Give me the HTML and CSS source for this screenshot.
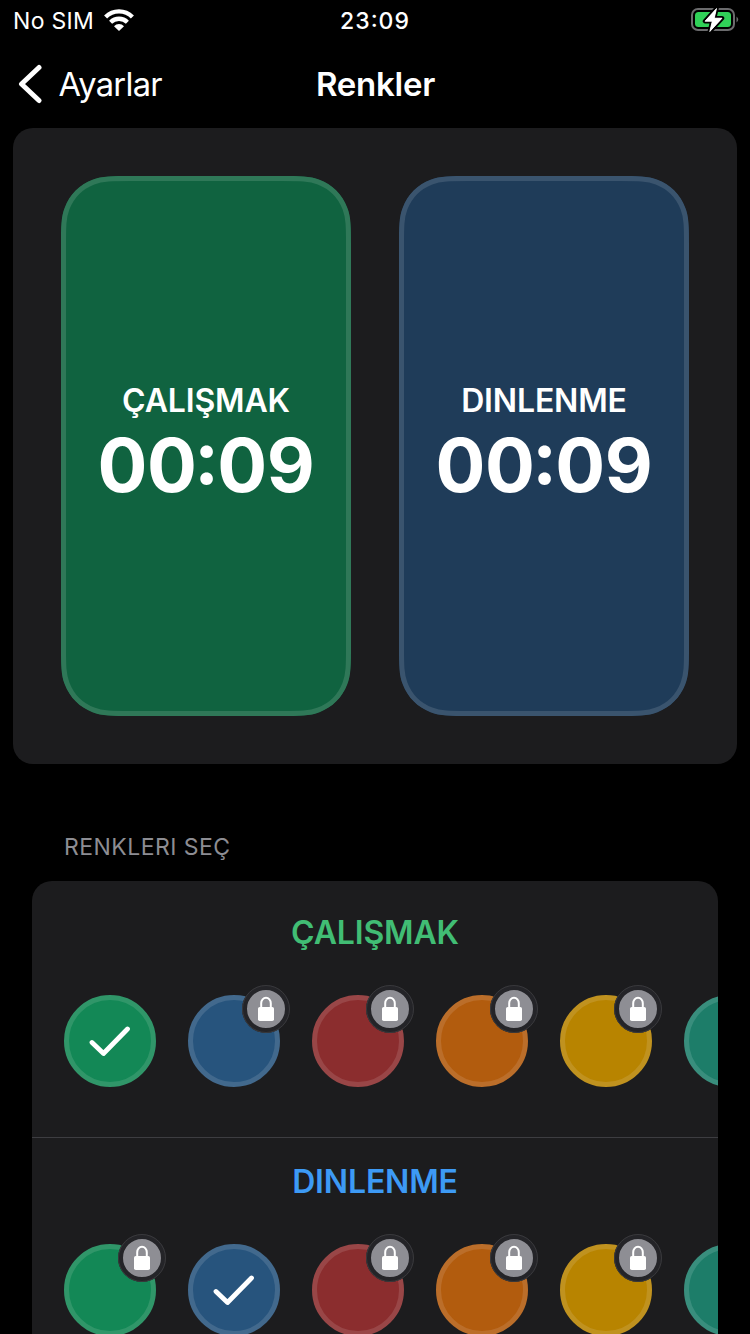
FILE: index.html
```
<!DOCTYPE html>
<html lang="tr">
<head>
<meta charset="utf-8">
<title>Renkler</title>
<link rel="stylesheet" href="styles.css">
</head>
<body>
<svg class="defs" width="0" height="0" aria-hidden="true">
  <symbol id="lock" viewBox="0 0 18 26">
    <path d="M4.200 12V7.200a4.800 5.400 0 0 1 9.600 0V12" fill="none" stroke="#fff" stroke-width="2"/>
    <rect x="1" y="11" width="16" height="14" rx="1.800" fill="#fff"/>
  </symbol>
  <symbol id="check" viewBox="0 0 42 32">
    <path d="M3 17.500L14.500 28.500L38.500 4" fill="none" stroke="#fff" stroke-width="4.800" stroke-linecap="round" stroke-linejoin="round"/>
  </symbol>
  <clipPath id="squircle"><path id="outline" d="M70 0H220C239 0 249 0 258.500 3.800C271.500 8.800 281.200 18.500 286.200 31.500C290 41 290 51 290 70V470C290 489 290 499 286.200 508.500C281.200 521.500 271.500 531.200 258.500 536.200C249 540 239 540 220 540H70C51 540 41 540 31.500 536.200C18.500 531.200 8.800 521.500 3.800 508.500C0 499 0 489 0 470V70C0 51 0 41 3.800 31.500C8.800 18.500 18.500 8.800 31.500 3.800C41 0 51 0 70 0Z"/></clipPath>
</svg>
<header class="status">
  <span class="carrier">No SIM</span>
  <svg class="wifi" width="30" height="22" viewBox="0 0 30 22"><g fill="none" stroke="#fff" stroke-width="4.300"><path d="M1.600 7.900a19 19 0 0 1 26.800 0"/><path d="M6.600 13.200a12 12 0 0 1 16.800 0"/></g><path d="M10 17.200a7 7 0 0 1 10 0L15 22z" fill="#fff"/></svg>
  <span class="clock">23:09</span>
  <svg class="battery" width="50" height="26" viewBox="0 0 50 26"><rect x="2" y="2" width="42" height="21" rx="6" fill="none" stroke="#6b6b6d" stroke-width="2"/><path d="M46.500 9.500q3.500 3 0 6z" fill="#6b6b6d"/><rect x="5" y="5" width="36" height="15" rx="3.500" fill="#30d158"/><path d="M26.500 1.500L15 14.200h7.300L19.800 24.500L32 11.200h-7.800z" fill="#fff" stroke="#000" stroke-width="4.500" stroke-linejoin="round" paint-order="stroke"/><path d="M26.500 1.500L15 14.200h7.300L19.800 24.500L32 11.200h-7.800z" fill="#fff" stroke="#fff" stroke-width="0.800" stroke-linejoin="round"/></svg>
</header>
<nav class="nav">
  <svg class="back" width="24" height="40" viewBox="0 0 24 40"><path d="M21 3.500L3.500 20L21 36.500" fill="none" stroke="#fff" stroke-width="5" stroke-linecap="round" stroke-linejoin="round"/></svg>
  <span class="parent">Ayarlar</span>
  <h1 class="title">Renkler</h1>
</nav>
<section class="preview">
  <div class="phone">
    <svg class="shape" viewBox="0 0 290 540"><g clip-path="url(#squircle)"><use href="#outline" fill="#106340" stroke="#2f7858" stroke-width="10"/></g></svg>
    <span class="phone-label">ÇALIŞMAK</span>
    <span class="timer">00<span class="colon">:</span>09</span>
  </div>
  <div class="phone">
    <svg class="shape" viewBox="0 0 290 540"><g clip-path="url(#squircle)"><use href="#outline" fill="#1f3c59" stroke="#3a546e" stroke-width="10"/></g></svg>
    <span class="phone-label">DINLENME</span>
    <span class="timer">00<span class="colon">:</span>09</span>
  </div>
</section>
<h2 class="section-title">RENKLERI SEÇ</h2>
<section class="list">
  <div class="row">
    <h3 class="row-title work">ÇALIŞMAK</h3>
    <div class="swatches">
      <div class="swatch green"><svg class="check"><use href="#check"/></svg></div>
      <div class="swatch blue"><span class="badge"><svg class="lock"><use href="#lock"/></svg></span></div>
      <div class="swatch red"><span class="badge"><svg class="lock"><use href="#lock"/></svg></span></div>
      <div class="swatch orange"><span class="badge"><svg class="lock"><use href="#lock"/></svg></span></div>
      <div class="swatch yellow"><span class="badge"><svg class="lock"><use href="#lock"/></svg></span></div>
      <div class="swatch teal"></div>
    </div>
  </div>
  <div class="row second">
    <h3 class="row-title relax">DINLENME</h3>
    <div class="swatches">
      <div class="swatch green"><span class="badge"><svg class="lock"><use href="#lock"/></svg></span></div>
      <div class="swatch blue"><svg class="check"><use href="#check"/></svg></div>
      <div class="swatch red"><span class="badge"><svg class="lock"><use href="#lock"/></svg></span></div>
      <div class="swatch orange"><span class="badge"><svg class="lock"><use href="#lock"/></svg></span></div>
      <div class="swatch yellow"><span class="badge"><svg class="lock"><use href="#lock"/></svg></span></div>
      <div class="swatch teal"></div>
    </div>
  </div>
</section>
</body>
</html>
```
FILE: styles.css
```
* { box-sizing: border-box; margin: 0; }
body { width: 750px; height: 1334px; overflow: hidden; background: #000; color: #fff; font-family: Inter, "Liberation Sans", sans-serif; white-space: nowrap; }
svg { display: block; flex: none; }
.defs { position: absolute; }
.status { display: grid; grid-template-columns: 91px 236px 70px 1fr; height: 40px; padding: 0 10px 0 13px; align-items: center; font-size: 23px; line-height: 38px; }
.carrier { padding-top: 2px; letter-spacing: 0.3px; }
.clock { padding-top: 2px; font-weight: 500; text-align: center; letter-spacing: 1px; font-feature-settings: "case"; }
.battery { justify-self: end; }
.nav { display: grid; grid-template-columns: 40.500px 257.500px 118px; height: 88px; padding-left: 18px; align-items: center; font-size: 32.700px; line-height: 38px; }
.parent { letter-spacing: -0.700px; }
.title { font-size: 33px; font-weight: 600; letter-spacing: -0.250px; }
.preview { display: flex; gap: 48px; height: 636px; margin: 0 13px; padding: 48px; border-radius: 20px; background: #1c1c1e; }
.phone { display: grid; width: 290px; height: 540px; grid-template: 205px 40px 90px 1fr / 290px; justify-items: center; }
.shape { grid-area: 1 / 1 / 5 / 2; width: 290px; height: 540px; }
.phone-label { grid-area: 2 / 1; font-size: 32px; font-weight: 600; line-height: 40px; letter-spacing: -0.150px; }
.timer { grid-area: 3 / 1; font-size: 74px; font-weight: 700; line-height: 88px; letter-spacing: -0.300px; font-feature-settings: "case"; }
.colon { margin: 0 -1.500px 0 -2.500px; }
.section-title { height: 117px; padding: 68px 0 0 64px; color: #8d8d93; font-size: 23px; font-weight: 400; line-height: 30px; letter-spacing: 0.450px; }
.list { height: 453px; margin: 0 32px; overflow: hidden; border-radius: 20px 20px 0 0; background: #1c1c1e; }
.row { height: 257px; padding: 32px 32px 0; border-bottom: 1px solid #3d3d41; }
.second { padding-top: 24px; }
.row-title { height: 81.500px; font-size: 32px; font-weight: 600; line-height: 40px; text-align: center; letter-spacing: -0.150px; }
.second .row-title { height: 82px; }
.work { color: #41bd74; }
.relax { color: #3d9af5; }
.swatches { display: flex; gap: 32px; }
.swatch { position: relative; display: grid; flex: none; width: 92px; height: 92px; place-items: center; border: 5px solid; border-radius: 50%; }
.green { background: #138856; border-color: #309669; }
.blue { background: #27547d; border-color: #42698d; }
.red { background: #8b2d2e; border-color: #994647; }
.orange { background: #b25c0e; border-color: #bb6e2a; }
.yellow { background: #b88400; border-color: #c0921f; }
.teal { background: #1d7d69; border-color: #398e7d; }
.check { width: 42px; height: 32px; }
.badge { position: absolute; top: -15px; right: -15px; display: grid; width: 48px; height: 48px; place-items: center; border: 5px solid #242428; border-radius: 50%; background: #8e8e94; outline: 0.500px solid #39393c; outline-offset: -1px; }
.lock { width: 18px; height: 26px; }
```
